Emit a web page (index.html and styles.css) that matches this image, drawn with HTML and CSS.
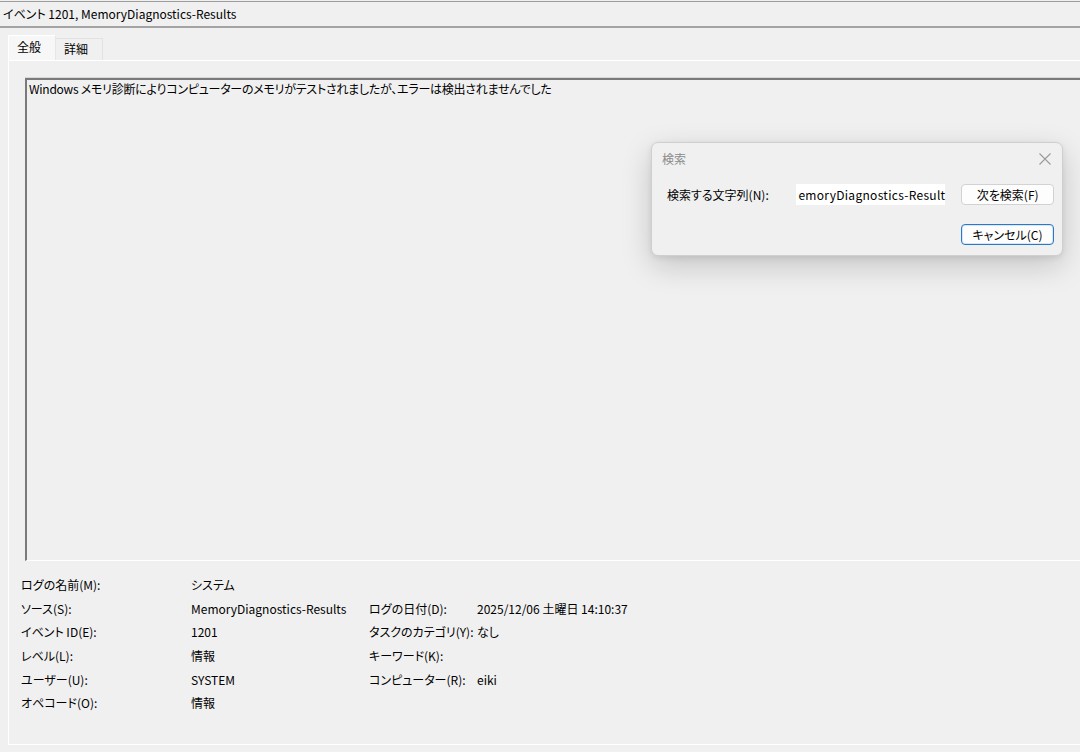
FILE: index.html
```html
<!DOCTYPE html>
<html lang="ja">
<head>
    <meta charset="UTF-8">
    <title>イベント 1201, MemoryDiagnostics-Results</title>
    <link rel="stylesheet" href="styles.css">
</head>
<body>
    <div class="window">
        <div class="caption">イベント 1201, MemoryDiagnostics-Results</div>

        <div class="tabs">
            <div class="tab active">全般</div>
            <div class="tab">詳細</div>
        </div>

        <div class="panel">
            <div class="message">Windows メモリ診断によりコンピューターのメモリがテストされましたが、エラーは検出されませんでした</div>

            <div class="details">
                <span>ログの名前(M):</span><span>システム</span><span></span><span></span>
                <span>ソース(S):</span><span>MemoryDiagnostics-Results</span><span>ログの日付(D):</span><span>2025/12/06 土曜日 14:10:37</span>
                <span>イベント ID(E):</span><span>1201</span><span>タスクのカテゴリ(Y):</span><span>なし</span>
                <span>レベル(L):</span><span>情報</span><span>キーワード(K):</span><span></span>
                <span>ユーザー(U):</span><span>SYSTEM</span><span>コンピューター(R):</span><span>eiki</span>
                <span>オペコード(O):</span><span>情報</span><span></span><span></span>
            </div>
        </div>
    </div>

    <!-- find dialog floating over the event view -->
    <div class="find-dialog">
        <div class="find-head">
            <span class="find-title">検索</span>
            <svg class="find-close" width="12" height="12" viewBox="0 0 12 12">
                <path d="M0.5 0.5 L11.5 11.5 M11.5 0.5 L0.5 11.5" stroke="#9a9a9a" stroke-width="1.1" fill="none"/>
            </svg>
        </div>
        <div class="find-row">
            <span class="find-label">検索する文字列(N):</span>
            <div class="find-input">emoryDiagnostics-Result</div>
            <button class="btn">次を検索(F)</button>
        </div>
        <div class="find-row find-actions">
            <button class="btn btn-default">キャンセル(C)</button>
        </div>
    </div>
</body>
</html>
```

FILE: styles.css
```css
:root {
    --face: #f0f0f0;
    --edge-dark: #a0a0a0;
    --edge-light: #ffffff;
    --text: #000;
}

html, body {
    margin: 0;
    padding: 0;
    height: 100%;
    overflow: hidden;
}

body {
    font-family: "Noto Sans CJK JP", "Noto Sans", sans-serif;
    font-size: 12px;
    font-feature-settings: "palt";
    color: var(--text);
    background-color: var(--face);
    position: relative;
}

.window {
    display: flex;
    flex-direction: column;
    height: 752px;
}

.caption {
    margin-top: 1px;
    height: 24px;
    line-height: 23px;
    padding-left: 3px;
    border-top: 1px solid #9c9c9c;
    border-bottom: 2px solid #a4a4a4;
}

.tabs {
    display: flex;
    align-items: flex-end;
    margin: 8px 0 0 8px;
    height: 24px;
}

.tab {
    height: 21px;
    line-height: 20px;
    padding: 0 14px 0 8px;
    border: 1px solid #e2e2e2;
    border-bottom: none;
    border-left: none;
}

.tab.active {
    height: 24px;
    line-height: 21px;
    padding: 0 14px 0 8px;
    background-color: #f7f7f7;
    border-left: 1px solid var(--edge-light);
    border-top: 1px solid var(--edge-light);
    border-right: 1px solid #e6e6e6;
}

.panel {
    flex: 1;
    margin: 0 0 7px 8px;
    padding: 17px 0 0 16px;
    border-top: 1px solid var(--edge-light);
    border-left: 1px solid var(--edge-light);
    border-bottom: 1px solid var(--edge-light);
    display: flex;
    flex-direction: column;
}

.message {
    height: 480px;
    width: 1100px;
    padding: 0 0 0 2px;
    letter-spacing: -0.25px;
    border-top: 2px solid #7a7a7a;
    border-left: 2px solid #7a7a7a;
    border-bottom: 1px solid var(--edge-light);
    box-shadow: 0 -1px 0 #d8d8d8;
}

.details {
    display: grid;
    grid-template-columns: 170px 178px 108px auto;
    grid-auto-rows: 23.6px;
    align-items: center;
    margin: 12px 0 0 -4px;
    white-space: nowrap;
}

/* find dialog */
.find-dialog {
    position: absolute;
    left: 651px;
    top: 142px;
    width: 412px;
    height: 114px;
    background-color: #f0f0f0;
    border: 1px solid #cfcfcf;
    border-radius: 7px;
    box-shadow: 0 10px 30px rgba(0, 0, 0, 0.18), 0 2px 6px rgba(0, 0, 0, 0.08);
    padding: 0 8px 0 10px;
    box-sizing: border-box;
}

.find-head {
    display: flex;
    justify-content: space-between;
    align-items: center;
    height: 31px;
    padding-right: 3px;
}

.find-title {
    color: #8c8c8c;
}

.find-row {
    display: flex;
    align-items: center;
    margin-top: 10px;
}

.find-label {
    width: 130px;
    padding-left: 5px;
}

.find-input {
    width: 147px;
    height: 21px;
    line-height: 21px;
    padding-left: 2px;
    letter-spacing: 0.3px;
    background-color: #fff;
    white-space: nowrap;
    margin-right: 16px;
}

.btn {
    font: inherit;
    font-feature-settings: "palt";
    width: 93px;
    height: 21px;
    padding: 0;
    background-color: #fdfdfd;
    border: 1px solid #d2d2d2;
    border-radius: 4px;
    color: var(--text);
}

.find-actions {
    justify-content: flex-end;
    margin-top: 19px;
}

.btn-default {
    border: 1px solid #2a78c8;
    box-shadow: inset 0 0 0 1px #d8e6f5;
}
```
